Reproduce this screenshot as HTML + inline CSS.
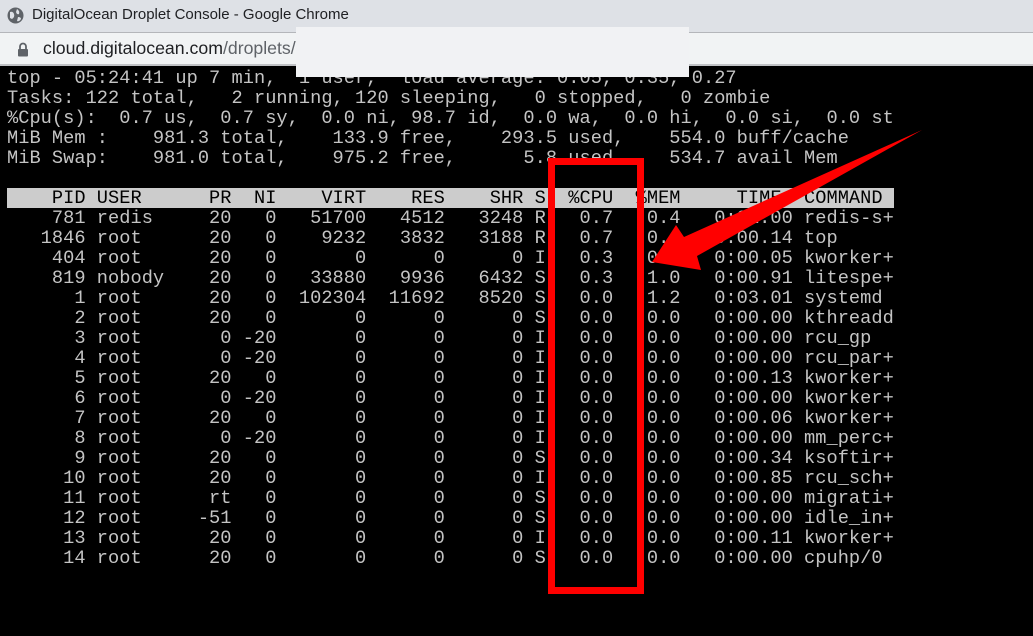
<!DOCTYPE html>
<html><head><meta charset="utf-8"><style>
*{margin:0;padding:0;box-sizing:border-box}
body{width:1033px;height:636px;overflow:hidden;background:#000;position:relative;font-family:"Liberation Sans",sans-serif}
.title{position:absolute;left:0;top:0;width:1033px;height:33px;background:#dee1e6;border-bottom:1px solid #b4b6ba}
.title span{position:absolute;left:32px;top:6px;font-size:15px;color:#202124}
.addr{position:absolute;left:0;top:33px;width:1033px;height:33px;background:#f1f3f4;border-bottom:2px solid #c0c2c5}
.addr span{position:absolute;left:43px;top:5px;font-size:17.7px;color:#202124}
.addr span i{font-style:normal;color:#5f6368}
.term{position:absolute;left:7px;top:68px;font-family:"Liberation Mono",monospace;font-size:18.67px;letter-spacing:0.03px;line-height:20px;color:#c4c4c4;white-space:pre}
.hdr{display:block;background:#cccccc;color:#000;width:887px;height:20px}
.white{position:absolute;left:296px;top:27px;width:393px;height:50px;background:#f1f2f4}
</style></head><body>
<div class="title">
<svg style="position:absolute;left:7px;top:7px" width="17" height="17" viewBox="0 0 17 17"><circle cx="8.5" cy="8.5" r="8" fill="#5f6368"/><path d="M3 5 Q6 4 7 7 Q8 10 5 12 L3 11 Z M10 2 Q13 4 12 7 Q10 8 9 5 Z M11 10 Q14 10 14 12 Q12 15 10 14 Z" fill="#dee1e6"/></svg>
<span>DigitalOcean Droplet Console - Google Chrome</span></div>
<div class="addr">
<svg style="position:absolute;left:17px;top:9px" width="12" height="15" viewBox="0 0 12 15"><path d="M3 7 V4.5 A3 3 0 0 1 9 4.5 V7" fill="none" stroke="#5f6368" stroke-width="1.8"/><rect x="1" y="7" width="10" height="7.5" rx="1" fill="#5f6368"/></svg>
<span>cloud.digitalocean.com<i>/droplets/</i></span></div>
<div class="term">top - 05:24:41 up 7 min,  1 user,  load average: 0.05, 0.35, 0.27
Tasks: 122 total,   2 running, 120 sleeping,   0 stopped,   0 zombie
%Cpu(s):  0.7 us,  0.7 sy,  0.0 ni, 98.7 id,  0.0 wa,  0.0 hi,  0.0 si,  0.0 st
MiB Mem :    981.3 total,    133.9 free,    293.5 used,    554.0 buff/cache
MiB Swap:    981.0 total,    975.2 free,      5.8 used.    534.7 avail Mem

<span class="hdr">    PID USER      PR  NI    VIRT    RES    SHR S  %CPU  %MEM     TIME+ COMMAND</span>    781 redis     20   0   51700   4512   3248 R   0.7   0.4   0:01.00 redis-s+
   1846 root      20   0    9232   3832   3188 R   0.7   0.4   0:00.14 top
    404 root      20   0       0      0      0 I   0.3   0.0   0:00.05 kworker+
    819 nobody    20   0   33880   9936   6432 S   0.3   1.0   0:00.91 litespe+
      1 root      20   0  102304  11692   8520 S   0.0   1.2   0:03.01 systemd
      2 root      20   0       0      0      0 S   0.0   0.0   0:00.00 kthreadd
      3 root       0 -20       0      0      0 I   0.0   0.0   0:00.00 rcu_gp
      4 root       0 -20       0      0      0 I   0.0   0.0   0:00.00 rcu_par+
      5 root      20   0       0      0      0 I   0.0   0.0   0:00.13 kworker+
      6 root       0 -20       0      0      0 I   0.0   0.0   0:00.00 kworker+
      7 root      20   0       0      0      0 I   0.0   0.0   0:00.06 kworker+
      8 root       0 -20       0      0      0 I   0.0   0.0   0:00.00 mm_perc+
      9 root      20   0       0      0      0 S   0.0   0.0   0:00.34 ksoftir+
     10 root      20   0       0      0      0 I   0.0   0.0   0:00.85 rcu_sch+
     11 root      rt   0       0      0      0 S   0.0   0.0   0:00.00 migrati+
     12 root     -51   0       0      0      0 S   0.0   0.0   0:00.00 idle_in+
     13 root      20   0       0      0      0 I   0.0   0.0   0:00.11 kworker+
     14 root      20   0       0      0      0 S   0.0   0.0   0:00.00 cpuhp/0</div>
<div class="white"></div>
<svg style="position:absolute;left:0;top:0" width="1033" height="636">
<rect x="551.5" y="161.5" width="89" height="429" fill="none" stroke="#ff0000" stroke-width="7"/>
<polygon points="652,262 676,225 684,237 922,130 697,256 701,270" fill="#ff0000"/>
</svg>
</body></html>
